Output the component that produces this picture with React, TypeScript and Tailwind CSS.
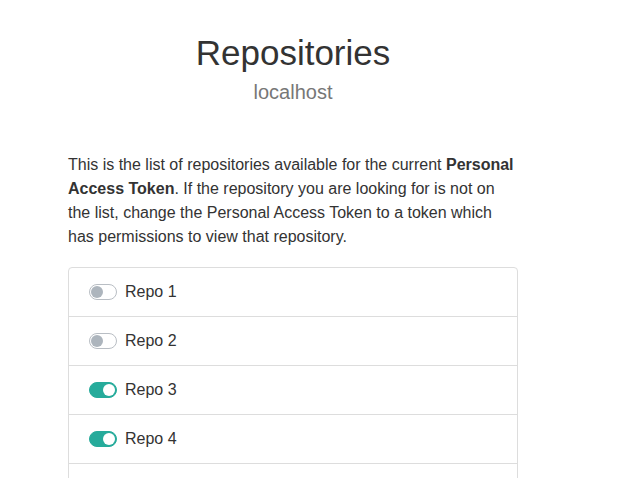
import React from "react";

const repos = [
  { name: "Repo 1", enabled: false },
  { name: "Repo 2", enabled: false },
  { name: "Repo 3", enabled: true },
  { name: "Repo 4", enabled: true },
  { name: "Repo 5", enabled: false },
];

const Toggle: React.FC<{ on: boolean }> = ({ on }) => (
  <span
    className={
      on
        ? "flex items-center justify-end w-[28px] h-[16px] rounded-full bg-[#26ab9b] border border-[#26ab9b] px-[1px]"
        : "flex items-center justify-start w-[28px] h-[16px] rounded-full bg-white border border-[#b9bec4] px-[1px]"
    }
  >
    <span
      className={
        on
          ? "w-[12px] h-[12px] rounded-full bg-white"
          : "w-[12px] h-[12px] rounded-full bg-[#adb5bd]"
      }
    />
  </span>
);

export default function App() {
  return (
    <div className="min-h-[478px] bg-white font-['Liberation_Sans',Arial,sans-serif] text-[#333]">
      <div className="ml-[68px] w-[450px] pt-[32px]">
        <div className="text-center">
          <h1 className="text-[35px] leading-[42px] text-[#333]">Repositories</h1>
          <div className="text-[20px] leading-[26px] text-[#777] mt-[5px]">localhost</div>
        </div>
        <p className="mt-[48px] text-[16px] leading-[24px] text-[#333]">
          This is the list of repositories available for the current <b>Personal Access Token</b>. If the
          repository you are looking for is not on the list, change the Personal Access Token to a token which
          has permissions to view that repository.
        </p>
        <div className="mt-[18px] border border-[#ddd] rounded-[4px]">
          {repos.map((r, i) => (
            <div
              key={r.name}
              className={
                i === 0
                  ? "flex items-center gap-[8px] h-[48px] pl-[20px]"
                  : "flex items-center gap-[8px] h-[49px] pl-[20px] border-t border-[#ddd]"
              }
            >
              <Toggle on={r.enabled} />
              <span className="text-[16px]">{r.name}</span>
            </div>
          ))}
        </div>
      </div>
    </div>
  );
}
